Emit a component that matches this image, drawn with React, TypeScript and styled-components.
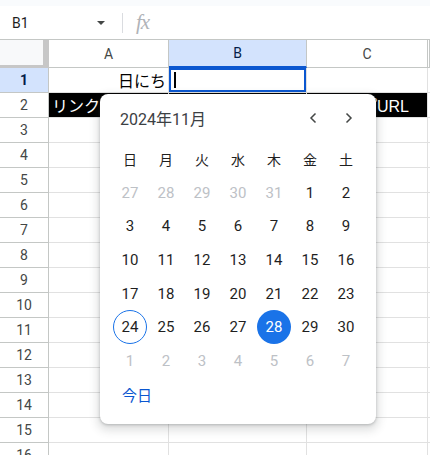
import React from 'react';
import styled, { createGlobalStyle } from 'styled-components';

const GlobalStyle = createGlobalStyle`
  body {
    margin: 0;
    font-family: 'Roboto', 'Noto Sans CJK JP', sans-serif;
    background: #fff;
  }
`;

const CELL_FONT = `'Liberation Sans', 'Noto Sans CJK JP', sans-serif`;
const UI_FONT = `'Roboto', 'Noto Sans CJK JP', sans-serif`;

const Page = styled.div`
  position: relative;
  width: 430px;
  height: 455px;
  overflow: hidden;
  background: #fff;
`;

const TopStrip = styled.div`
  height: 6px;
  background: #f9fbfd;
`;

const FormulaBar = styled.div`
  height: 33px;
  display: flex;
  align-items: center;
  border-bottom: 1px solid #c4c7c5;
  font-family: ${UI_FONT};
`;

const NameBox = styled.div`
  width: 110px;
  box-sizing: border-box;
  padding: 0 0 0 12px;
  display: flex;
  align-items: center;
  justify-content: space-between;
  font-size: 14px;
  color: #1f1f1f;
`;

const Caret = styled.span`
  width: 0;
  height: 0;
  margin-right: 5px;
  border-left: 4px solid transparent;
  border-right: 4px solid transparent;
  border-top: 4px solid #444746;
`;

const Divider = styled.div`
  width: 1px;
  height: 20px;
  margin: 0 13px 0 12px;
  background: #dadce0;
`;

const Fx = styled.span`
  font-family: 'Liberation Serif', serif;
  font-style: italic;
  font-size: 21px;
  color: #b0b3b8;
  letter-spacing: -1px;
`;

const Row = styled.div<{ $height: number }>`
  display: grid;
  grid-template-columns: 49px 120px 138px 121px 1fr;
  height: ${(p) => p.$height}px;
`;

const Corner = styled.div`
  box-sizing: border-box;
  background: #f8f9fa;
  border-right: 6px solid #c7c7c7;
  border-bottom: 3px solid #c7c7c7;
`;

const ColHeader = styled.div<{ $active?: boolean }>`
  box-sizing: border-box;
  display: flex;
  align-items: center;
  justify-content: center;
  font-family: ${UI_FONT};
  font-size: 14px;
  color: ${(p) => (p.$active ? '#041e49' : '#444746')};
  background: ${(p) => (p.$active ? '#d3e3fd' : '#fff')};
  border-right: 1px solid #c4c7c5;
  border-bottom: ${(p) => (p.$active ? '2px solid #0b57d0' : '1px solid #c4c7c5')};
`;

const RowHeader = styled.div<{ $active?: boolean }>`
  box-sizing: border-box;
  display: flex;
  align-items: center;
  justify-content: center;
  font-family: ${UI_FONT};
  font-size: 14px;
  font-weight: ${(p) => (p.$active ? 700 : 400)};
  color: ${(p) => (p.$active ? '#041e49' : '#444746')};
  background: ${(p) => (p.$active ? '#d3e3fd' : '#fff')};
  border-right: 1px solid #c4c7c5;
  border-bottom: 1px solid #c4c7c5;
`;

const Cell = styled.div<{ $dark?: boolean; $align?: 'left' | 'right'; $selected?: boolean; $indent?: number }>`
  box-sizing: border-box;
  display: flex;
  align-items: center;
  justify-content: ${(p) => (p.$align === 'right' ? 'flex-end' : 'flex-start')};
  padding: 0 2px 0 ${(p) => p.$indent ?? 3}px;
  overflow: hidden;
  white-space: nowrap;
  font-family: ${CELL_FONT};
  font-size: 16px;
  color: ${(p) => (p.$dark ? '#fff' : '#000')};
  background: ${(p) => (p.$dark ? '#000' : '#fff')};
  border-right: 1px solid #e1e1e1;
  border-bottom: 1px solid #e1e1e1;
  box-shadow: ${(p) => (p.$selected ? 'inset 0 0 0 2px #0b57d0' : 'none')};
`;

const TextCursor = styled.span`
  display: inline-block;
  width: 2px;
  height: 16px;
  margin-left: 2px;
  background: #000;
`;

/* ---------- date picker ---------- */

const Popup = styled.div`
  position: absolute;
  left: 100px;
  top: 94px;
  width: 276px;
  height: 330px;
  box-sizing: border-box;
  padding: 0 12px 12px;
  display: flex;
  flex-direction: column;
  background: #fff;
  border-radius: 8px;
  box-shadow: 0 1px 3px rgba(60, 64, 67, 0.3), 0 4px 8px 3px rgba(60, 64, 67, 0.15);
  font-family: ${UI_FONT};
`;

const CalHeader = styled.div`
  height: 48px;
  display: flex;
  align-items: center;
  padding-left: 8px;
  margin-right: -3px;
`;

const Title = styled.div`
  margin-right: auto;
  font-size: 16px;
  color: #3c4043;
`;

const NavButton = styled.button`
  width: 36px;
  height: 36px;
  padding: 0;
  border: none;
  background: transparent;
  display: flex;
  align-items: center;
  justify-content: center;
`;

const WeekGrid = styled.div<{ $rowHeight: number }>`
  display: grid;
  grid-template-columns: repeat(7, 36px);
  grid-auto-rows: ${(p) => p.$rowHeight}px;
  align-items: center;
  justify-items: center;
`;

const DayName = styled.div`
  font-size: 14px;
  color: #1f1f1f;
`;

const Day = styled.div<{ $muted?: boolean; $today?: boolean; $selected?: boolean }>`
  width: 34px;
  height: 34px;
  box-sizing: border-box;
  border-radius: 50%;
  display: flex;
  align-items: center;
  justify-content: center;
  font-size: 15px;
  color: ${(p) => (p.$selected ? '#fff' : p.$muted ? '#bdc1c6' : '#1f1f1f')};
  background: ${(p) => (p.$selected ? '#1a73e8' : 'transparent')};
  border: ${(p) => (p.$today ? '1px solid #1a73e8' : 'none')};
`;

const CalFooter = styled.div`
  height: 34px;
  display: flex;
  align-items: center;
  padding-left: 10px;
`;

const TodayLink = styled.span`
  font-size: 15px;
  color: #0b57d0;
`;

const Chevron = ({ dir }: { dir: 'left' | 'right' }) => (
  <svg width="10" height="12" viewBox="0 0 10 12">
    <path
      d={dir === 'left' ? 'M7.5 1.5 L3 6 L7.5 10.5' : 'M2.5 1.5 L7 6 L2.5 10.5'}
      fill="none"
      stroke="#444746"
      strokeWidth="1.5"
    />
  </svg>
);

const dayNames = ['日', '月', '火', '水', '木', '金', '土'];

type DayItem = { n: number; muted: boolean };

const buildDays = (): DayItem[] => {
  const days: DayItem[] = [];
  for (let d = 27; d <= 31; d++) days.push({ n: d, muted: true });
  for (let d = 1; d <= 30; d++) days.push({ n: d, muted: false });
  for (let d = 1; d <= 7; d++) days.push({ n: d, muted: true });
  return days;
};

const DatePicker = () => {
  const days = buildDays();
  return (
    <Popup>
      <CalHeader>
        <Title>2024年11月</Title>
        <NavButton>
          <Chevron dir="left" />
        </NavButton>
        <NavButton>
          <Chevron dir="right" />
        </NavButton>
      </CalHeader>
      <WeekGrid $rowHeight={34}>
        {dayNames.map((d) => (
          <DayName key={d}>{d}</DayName>
        ))}
      </WeekGrid>
      <WeekGrid $rowHeight={33.6}>
        {days.map((d, i) => (
          <Day
            key={i}
            $muted={d.muted}
            $today={!d.muted && d.n === 24}
            $selected={!d.muted && d.n === 28}
          >
            {d.n}
          </Day>
        ))}
      </WeekGrid>
      <CalFooter>
        <TodayLink>今日</TodayLink>
      </CalFooter>
    </Popup>
  );
};

const App = () => {
  const rowNumbers = Array.from({ length: 16 }, (_, i) => i + 1);

  return (
    <Page>
      <GlobalStyle />
      <TopStrip />
      <FormulaBar>
        <NameBox>
          B1
          <Caret />
        </NameBox>
        <Divider />
        <Fx>fx</Fx>
      </FormulaBar>

      <Row $height={28}>
        <Corner />
        <ColHeader>A</ColHeader>
        <ColHeader $active>B</ColHeader>
        <ColHeader>C</ColHeader>
        <ColHeader />
      </Row>

      {rowNumbers.map((n) => (
        <Row key={n} $height={25}>
          <RowHeader $active={n === 1}>{n}</RowHeader>
          {n === 1 ? (
            <>
              <Cell $align="right">日にち</Cell>
              <Cell $selected>
                <TextCursor />
              </Cell>
              <Cell />
            </>
          ) : n === 2 ? (
            <>
              <Cell $dark>リンクタイトル</Cell>
              <Cell $dark />
              <Cell $dark $indent={6}>
                ショップURL
              </Cell>
            </>
          ) : (
            <>
              <Cell />
              <Cell />
              <Cell />
            </>
          )}
          <Cell />
        </Row>
      ))}

      <DatePicker />
    </Page>
  );
};

export default App;
